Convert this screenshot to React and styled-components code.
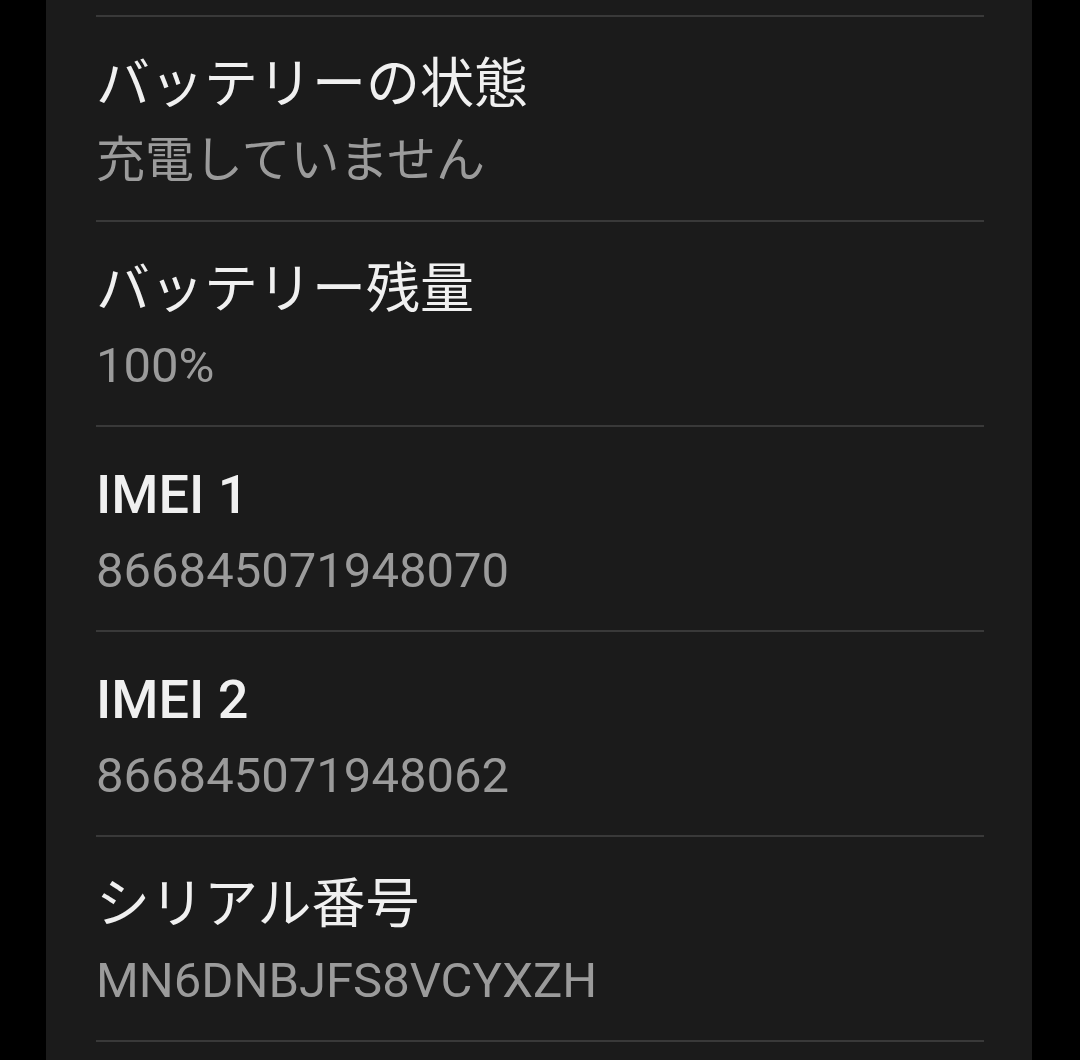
import styled, { createGlobalStyle } from "styled-components";

const GlobalStyle = createGlobalStyle`
  html, body {
    margin: 0;
    padding: 0;
    background: #000;
  }
  body {
    font-family: Roboto, "Noto Sans CJK JP", sans-serif;
  }
`;

const items = [
  { title: "バッテリーの状態", value: "充電していません" },
  { title: "バッテリー残量", value: "100%" },
  { title: "IMEI 1", value: "866845071948070", medium: true },
  { title: "IMEI 2", value: "866845071948062", medium: true },
  { title: "シリアル番号", value: "MN6DNBJFS8VCYXZH" },
];

const Panel = styled.div`
  margin-left: 46px;
  width: 986px;
  min-height: 1060px;
  background: #1b1b1b;
  padding: 15px 48px 0 50px;
  box-sizing: border-box;
`;

const List = styled.div`
  display: flex;
  flex-direction: column;
  border-bottom: 2px solid #393939;
`;

const Row = styled.div`
  border-top: 2px solid #393939;
  padding: 36px 0 29px 0;
  display: flex;
  flex-direction: column;
`;

const Title = styled.div`
  font-size: 54px;
  line-height: 64px;
  height: 64px;
  font-weight: ${({ $medium }) => ($medium ? 500 : 400)};
  color: #f0f0f0;
  white-space: nowrap;
`;

const Value = styled.div`
  margin-top: 14px;
  font-size: 49px;
  line-height: 60px;
  height: 60px;
  color: #9b9b9b;
  white-space: nowrap;
`;

export default function App() {
  return (
    <>
      <GlobalStyle />
      <Panel>
        <List>
          {items.map((it) => (
            <Row key={it.title}>
              <Title $medium={it.medium}>{it.title}</Title>
              <Value>{it.value}</Value>
            </Row>
          ))}
        </List>
      </Panel>
    </>
  );
}
